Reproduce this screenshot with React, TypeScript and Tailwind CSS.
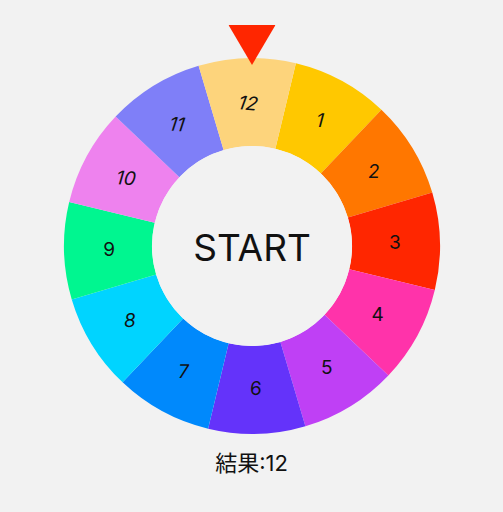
import { useState } from "react";

const SIZE = 380;
const C = SIZE / 2;
const R_OUT = 188;
const R_IN = 100;
const R_LABEL = 143;
const OFFSET = -1.5; // wheel rest angle, degrees

const SLICES = [
  { n: 1, color: "#ffc800", skew: -15, rot: 0 },
  { n: 2, color: "#ff7700", skew: -6, rot: 0 },
  { n: 3, color: "#ff2600", skew: 0, rot: 0 },
  { n: 4, color: "#ff33aa", skew: 0, rot: 0 },
  { n: 5, color: "#bf40f5", skew: 0, rot: 0 },
  { n: 6, color: "#6433fa", skew: -2, rot: 0 },
  { n: 7, color: "#0089fc", skew: -8, rot: 0 },
  { n: 8, color: "#00d4ff", skew: -8, rot: 0 },
  { n: 9, color: "#00f690", skew: 0, rot: 0 },
  { n: 10, color: "#ee82ee", skew: -12, rot: 4 },
  { n: 11, color: "#7f7ff8", skew: -13, rot: 5 },
  { n: 12, color: "#fdd47c", skew: -14, rot: 6 },
];

function pt(r: number, deg: number) {
  const a = (deg * Math.PI) / 180;
  return [C + r * Math.sin(a), C - r * Math.cos(a)];
}

function slicePath(from: number, to: number) {
  const [x1, y1] = pt(R_OUT, from);
  const [x2, y2] = pt(R_OUT, to);
  const [x3, y3] = pt(R_IN, to);
  const [x4, y4] = pt(R_IN, from);
  return `M${x1} ${y1} A${R_OUT} ${R_OUT} 0 0 1 ${x2} ${y2} L${x3} ${y3} A${R_IN} ${R_IN} 0 0 0 ${x4} ${y4} Z`;
}

function Wheel({ onStart }: { onStart: () => void }) {
  return (
    <svg width={SIZE} height={SIZE} viewBox={`0 0 ${SIZE} ${SIZE}`}>
      {SLICES.map((s) => {
        const mid = OFFSET + 30 * s.n;
        return <path key={s.n} d={slicePath(mid - 15, mid + 15)} fill={s.color} />;
      })}
      {SLICES.map((s) => {
        const mid = OFFSET + 30 * s.n;
        const [x, y] = pt(R_LABEL, mid);
        return (
          <text
            key={s.n}
            transform={`translate(${x} ${y}) rotate(${s.rot}) skewX(${s.skew})`}
            textAnchor="middle"
            dominantBaseline="central"
            fontSize={19}
            fill="#111"
            style={{ fontFamily: "Inter, sans-serif" }}
          >
            {s.n}
          </text>
        );
      })}
      <g className="cursor-pointer" onClick={onStart}>
        <circle cx={C} cy={C} r={R_IN} fill="#f2f2f2" />
        <text
          x={C}
          y={C + 1}
          textAnchor="middle"
          dominantBaseline="central"
          fontSize={37}
          fill="#111"
          style={{ fontFamily: "Inter, sans-serif" }}
        >
          START
        </text>
      </g>
    </svg>
  );
}

export default function App() {
  const [result] = useState(12);

  return (
    <div className="min-h-screen w-full bg-[#f2f2f2] flex flex-col items-center pt-[56px]">
      <div className="relative">
        <Wheel onStart={() => {}} />
        {/* pointer */}
        <svg
          className="absolute left-1/2 -translate-x-1/2 top-[-31px]"
          width="47"
          height="40"
          viewBox="0 0 47 40"
        >
          <polygon points="0,0 47,0 23.5,40" fill="#ff2600" />
        </svg>
      </div>
      <div className="mt-[12px] text-[22px] leading-[30px] text-[#111] font-['Inter','Noto_Sans_CJK_JP',sans-serif]">
        結果:{result}
      </div>
    </div>
  );
}
